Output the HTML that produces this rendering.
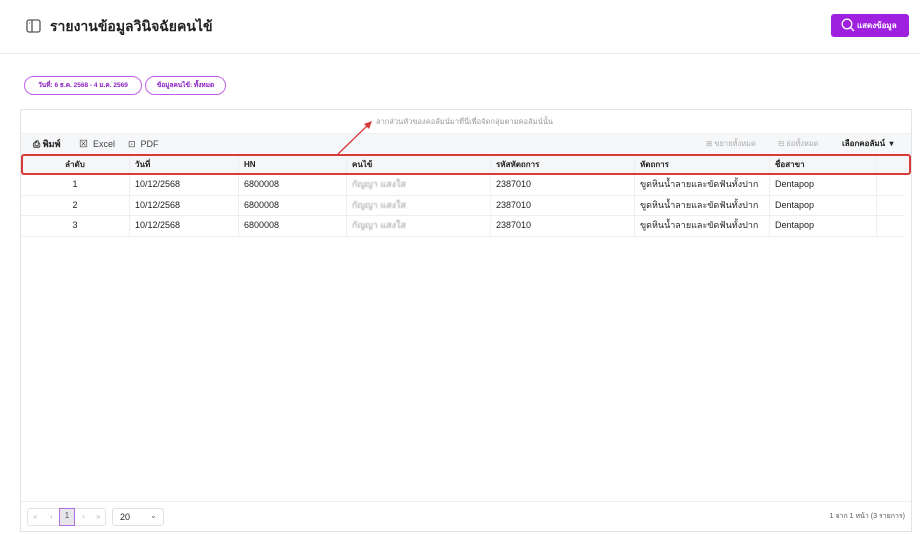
<!DOCTYPE html><html><head><meta charset="utf-8"><style>
*{box-sizing:border-box;margin:0;padding:0}
body{width:920px;height:534px;background:#fff;font-family:"Liberation Sans","Noto Sans CJK SC",sans-serif;font-size:9px;color:#222;position:relative;overflow:hidden;line-height:1}
.abs{position:absolute}
.hdr{left:0;top:0;width:920px;height:54px;border-bottom:1px solid #e8eaf0}
.title{left:50px;top:17px;font-size:14px;font-weight:bold;color:#222;line-height:18px}
.btn{left:831px;top:14px;width:78px;height:23px;background:#a020e0;border-radius:3px;color:#fff;font-size:8px;font-weight:bold;line-height:23px;padding-left:26px}
.chip{top:76px;height:19px;border:1px solid #c060e8;border-radius:10px;color:#8a20c0;font-size:6.5px;font-weight:bold;line-height:17px;text-align:center}
.grid{left:20px;top:109px;width:892px;height:423px;border:1px solid #e2e4e8}
.grp{left:0;top:0;width:890px;height:24px;border-bottom:1px solid #eee;color:#999;font-size:7.5px;line-height:24px;padding-left:355px}
.tb{left:0;top:24px;width:890px;height:20px;background:#f6f7f9}
.tb span{line-height:20px;top:0}
.th{top:44px;height:21px;background:#f5f6f8;font-weight:bold;font-size:8px}
.row{height:20.5px;border-bottom:1px solid #eee;position:relative}
.c{position:absolute;top:0;height:100%;display:flex;align-items:center;border-right:1px solid #eee;white-space:nowrap}
.ft{left:0;top:391px;width:890px;height:31px;border-top:1px solid #eee}
</style></head><body>
<div class="abs hdr"></div>
<svg class="abs" style="left:26px;top:19px" width="15" height="14" viewBox="0 0 15 14"><rect x="1" y="1" width="13" height="12" rx="2" fill="none" stroke="#555" stroke-width="1.3"/><line x1="6" y1="1" x2="6" y2="13" stroke="#555" stroke-width="1.3"/><line x1="3" y1="4" x2="4" y2="4" stroke="#555"/></svg>
<div class="abs title">รายงานข้อมูลวินิจฉัยคนไข้</div>
<div class="abs btn">แสดงข้อมูล</div>
<svg class="abs" style="left:841px;top:18px" width="14" height="14" viewBox="0 0 14 14"><circle cx="6" cy="6" r="4.8" fill="none" stroke="#fff" stroke-width="1.3"/><line x1="9.5" y1="9.5" x2="13" y2="13" stroke="#fff" stroke-width="1.3"/></svg>
<div class="abs chip" style="left:24px;width:118px">วันที่: 6 ธ.ค. 2568 - 4 ม.ค. 2569</div>
<div class="abs chip" style="left:145px;width:81px">ข้อมูลคนไข้: ทั้งหมด</div>
<div class="abs grid">
<div class="abs grp">ลากส่วนหัวของคอลัมน์มาที่นี่เพื่อจัดกลุ่มตามคอลัมน์นั้น</div>
<div class="abs tb">
<span class="abs" style="left:12px;font-weight:bold">⎙ พิมพ์</span>
<span class="abs" style="left:58px;color:#444">⊠&nbsp; Excel</span>
<span class="abs" style="left:107px;color:#444">⊡&nbsp; PDF</span>
<span class="abs" style="left:685px;color:#aaa;font-size:7.5px">⊞ ขยายทั้งหมด</span>
<span class="abs" style="left:757px;color:#aaa;font-size:7.5px">⊟ ย่อทั้งหมด</span>
<span class="abs" style="left:821px;font-weight:bold;font-size:8px">เลือกคอลัมน์ &nbsp;▾</span>
</div>
<div class="abs th" style="left:0;width:890px">
<div class="c" style="left:0;width:109px;justify-content:center">ลำดับ</div><div class="c" style="left:109px;width:109px;padding-left:5px">วันที่</div><div class="c" style="left:218px;width:108px;padding-left:5px">HN</div><div class="c" style="left:326px;width:144px;padding-left:5px">คนไข้</div><div class="c" style="left:470px;width:144px;padding-left:5px">รหัสหัตถการ</div><div class="c" style="left:614px;width:135px;padding-left:5px">หัตถการ</div><div class="c" style="left:749px;width:107px;padding-left:5px">ชื่อสาขา</div>
</div>
<div class="abs" style="left:0;top:44px;width:890px;height:21px;border:2px solid #d83a3a;border-radius:3px"></div>
<svg class="abs" style="left:315px;top:8px" width="40" height="38"><line x1="2" y1="36" x2="33" y2="6" stroke="#d83a3a" stroke-width="1.3"/><polygon points="36,3 28,6 33,11" fill="#d83a3a"/></svg>
<div class="abs" style="left:0;top:65px;width:884px">
<div class="row"><div class="c" style="left:0;width:109px;justify-content:center">1</div><div class="c" style="left:109px;width:109px;padding-left:5px">10/12/2568</div><div class="c" style="left:218px;width:108px;padding-left:5px">6800008</div><div class="c" style="left:326px;width:144px;padding-left:5px;color:#999;filter:blur(.6px)">กัญญา แสงใส</div><div class="c" style="left:470px;width:144px;padding-left:5px">2387010</div><div class="c" style="left:614px;width:135px;padding-left:5px">ขูดหินน้ำลายและขัดฟันทั้งปาก</div><div class="c" style="left:749px;width:107px;padding-left:5px">Dentapop</div></div>
<div class="row"><div class="c" style="left:0;width:109px;justify-content:center">2</div><div class="c" style="left:109px;width:109px;padding-left:5px">10/12/2568</div><div class="c" style="left:218px;width:108px;padding-left:5px">6800008</div><div class="c" style="left:326px;width:144px;padding-left:5px;color:#999;filter:blur(.6px)">กัญญา แสงใส</div><div class="c" style="left:470px;width:144px;padding-left:5px">2387010</div><div class="c" style="left:614px;width:135px;padding-left:5px">ขูดหินน้ำลายและขัดฟันทั้งปาก</div><div class="c" style="left:749px;width:107px;padding-left:5px">Dentapop</div></div>
<div class="row"><div class="c" style="left:0;width:109px;justify-content:center">3</div><div class="c" style="left:109px;width:109px;padding-left:5px">10/12/2568</div><div class="c" style="left:218px;width:108px;padding-left:5px">6800008</div><div class="c" style="left:326px;width:144px;padding-left:5px;color:#999;filter:blur(.6px)">กัญญา แสงใส</div><div class="c" style="left:470px;width:144px;padding-left:5px">2387010</div><div class="c" style="left:614px;width:135px;padding-left:5px">ขูดหินน้ำลายและขัดฟันทั้งปาก</div><div class="c" style="left:749px;width:107px;padding-left:5px">Dentapop</div></div>
</div>
<div class="abs ft">
<div class="abs" style="left:6px;top:6px;width:79px;height:18px;border:1px solid #e4e4e4;border-radius:3px;color:#bbb;font-size:8px">
<span class="abs" style="left:5px;top:4px">«</span><span class="abs" style="left:22px;top:4px">‹</span>
<div class="abs" style="left:31px;top:-1px;width:16px;height:18px;background:#e6e6ea;border:1px solid #b070e0;color:#555;text-align:center;padding-top:3px">1</div>
<span class="abs" style="left:54px;top:4px">›</span><span class="abs" style="left:68px;top:4px">»</span></div>
<div class="abs" style="left:91px;top:6px;width:52px;height:18px;border:1px solid #e0e0e0;border-radius:3px;font-size:9px;padding:4px 0 0 7px">20<span class="abs" style="left:37px;top:3px;color:#666;font-size:8px">⌄</span></div>
<div class="abs" style="right:6px;top:11px;font-size:7px;color:#555">1 จาก 1 หน้า (3 รายการ)</div>
</div>
</div>
</body></html>
